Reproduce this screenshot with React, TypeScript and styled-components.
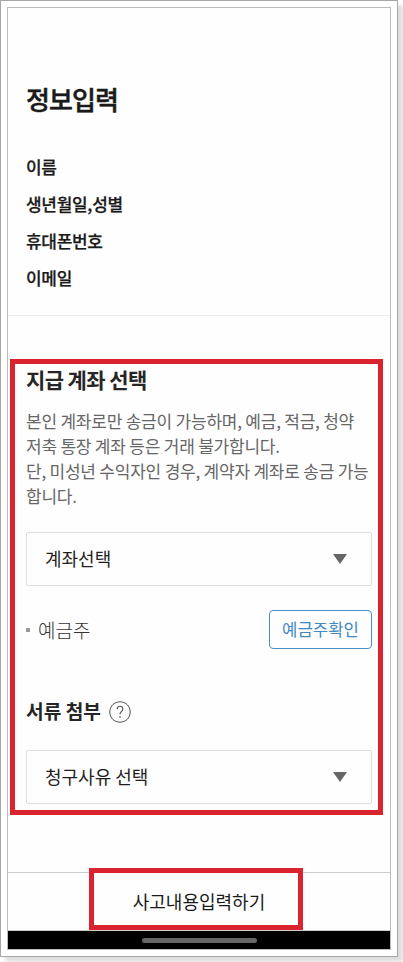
import React from 'react';
import styled, { createGlobalStyle } from 'styled-components';

const Global = createGlobalStyle`
  * { box-sizing: border-box; }
  html, body { margin: 0; background: #fff; }
  body {
    min-height: 962px;
    font-family: "Noto Sans CJK KR", "Noto Sans", sans-serif;
    color: #1a1a1a;
    overflow: hidden;
  }
  h1, h2, p, ul { margin: 0; padding: 0; }
`;

const Frame = styled.main`
  width: 398px;
  height: 957px;
  padding: 6px;
  border: 1px solid #a6a6a6;
  background: #fff;
  box-shadow: 5px 5px 4px #dedede;
`;

const Screen = styled.div`
  width: 384px;
  height: 943px;
  border: 1px solid #bcbcbc;
  display: flex;
  flex-direction: column;
  background: #fefefe;
`;

const Profile = styled.section`
  height: 308px;
  padding: 71px 0 0 18px;
  border-bottom: 1px solid #eee;
`;

const Title = styled.h1`
  font-size: 26px;
  line-height: 40px;
  font-weight: 500;
  letter-spacing: -0.9px;
  -webkit-text-stroke: 0.5px;
  white-space: nowrap;
`;

const InfoList = styled.ul`
  list-style: none;
  padding-top: 29px;
`;

const InfoItem = styled.li`
  height: 37px;
  line-height: 37px;
  font-size: 17px;
  font-weight: 500;
  letter-spacing: -0.3px;
  -webkit-text-stroke: 0.25px;
`;

const Claim = styled.section`
  width: 373px;
  height: 456px;
  margin: 43px 0 0 2px;
  padding: 0 6px 0 11px;
  border: 5px solid #d9232e;
  display: flex;
  flex-direction: column;
`;

const Heading = styled.h2<{ $size: number; $spacing: number }>`
  font-size: ${(p) => p.$size}px;
  letter-spacing: ${(p) => p.$spacing}px;
  line-height: 32px;
  font-weight: 700;
  color: #262626;
  white-space: nowrap;
`;

const ClaimHeading = styled(Heading)`
  line-height: 31px;
`;

const Notice = styled.p`
  margin-top: 13px;
  font-size: 17px;
  line-height: 25px;
  letter-spacing: -0.22px;
  color: #666;
  white-space: nowrap;
`;

const Select = styled.button<{ $top: number }>`
  margin-top: ${(p) => p.$top}px;
  width: 346px;
  height: 54px;
  flex: none;
  padding: 0 24px 0 18px;
  border: 1px solid #dedede;
  border-radius: 2px;
  background: transparent;
  display: flex;
  align-items: center;
  justify-content: space-between;
  font: 400 18px/26px "Noto Sans CJK KR", sans-serif;
  color: #1f1f1f;
`;

const SelectLabel = styled.span`
  padding-bottom: 2px;
`;

const HolderRow = styled.div`
  margin-top: 24px;
  height: 39px;
  display: flex;
  align-items: center;
`;

const Bullet = styled.span`
  width: 4px;
  height: 4px;
  background: #999;
`;

const HolderLabel = styled.span`
  flex: 1;
  margin-left: 8px;
  font-size: 19px;
  line-height: 28px;
  font-weight: 300;
  color: #333;
`;

const CheckButton = styled.button`
  width: 103px;
  height: 39px;
  padding: 0 0 2px;
  border: 1px solid #4a8fc6;
  border-radius: 4px;
  background: transparent;
  font: 400 16.7px/24px "Noto Sans CJK KR", sans-serif;
  color: #4189c3;
`;

const AttachRow = styled.div`
  margin-top: 46px;
  height: 34px;
  display: flex;
  align-items: center;
  gap: 8px;

  ${Heading} {
    padding-bottom: 2px;
  }
`;

const Footer = styled.footer`
  position: relative;
  margin-top: 57px;
  height: 59px;
  border-top: 1px solid #ccc;
  border-bottom: 1px solid #ccc;
  display: flex;
  justify-content: center;
`;

const SubmitButton = styled.button`
  width: 100%;
  padding: 0 0 1px;
  border: 0;
  background: transparent;
  font: 400 18px/27px "Noto Sans CJK KR", sans-serif;
  color: #1a1a1a;
`;

const Marker = styled.span`
  position: absolute;
  left: 81px;
  top: -5px;
  width: 214px;
  height: 62px;
  border: 5px solid #d9232e;
  pointer-events: none;
`;

const HomeBar = styled.div`
  flex: 1;
  background: #000;
  display: flex;
  justify-content: center;
  align-items: center;
`;

const HomePill = styled.span`
  width: 115px;
  height: 5px;
  border-radius: 3px;
  background: #666;
`;

const Arrow = () => (
  <svg width="14" height="10" viewBox="0 0 14 10">
    <path d="M0 0h14L7 10z" fill="#666" />
  </svg>
);

const HelpIcon = () => (
  <svg width="22" height="22" viewBox="0 0 22 22" fill="none" stroke="#555">
    <circle cx="11" cy="11" r="10.3" strokeWidth="1" />
    <path d="M8.2 8.2C8.2 6.3 9.4 5.3 11 5.3s2.8 1 2.8 2.7c0 2.3-2.8 2.6-2.8 5.2" strokeWidth="1.1" />
    <circle cx="11" cy="15.9" r=".8" fill="#555" stroke="none" />
  </svg>
);

const fields = ['이름', '생년월일,성별', '휴대폰번호', '이메일'];

export default function App() {
  return (
    <>
      <Global />
      <Frame>
        <Screen>
          <Profile>
            <Title>정보입력</Title>
            <InfoList>
              {fields.map((f) => (
                <InfoItem key={f}>{f}</InfoItem>
              ))}
            </InfoList>
          </Profile>
          <Claim>
            <ClaimHeading $size={21} $spacing={-0.6}>지급 계좌 선택</ClaimHeading>
            <Notice>
              본인 계좌로만 송금이 가능하며, 예금, 적금, 청약<br />
              저축 통장 계좌 등은 거래 불가합니다.<br />
              단, 미성년 수익자인 경우, 계약자 계좌로 송금 가능<br />
              합니다.
            </Notice>
            <Select $top={24}>
              <SelectLabel>계좌선택</SelectLabel>
              <Arrow />
            </Select>
            <HolderRow>
              <Bullet />
              <HolderLabel>예금주</HolderLabel>
              <CheckButton>예금주확인</CheckButton>
            </HolderRow>
            <AttachRow>
              <Heading $size={19.2} $spacing={0}>서류 첨부</Heading>
              <HelpIcon />
            </AttachRow>
            <Select $top={21}>
              <SelectLabel>청구사유 선택</SelectLabel>
              <Arrow />
            </Select>
          </Claim>
          <Footer>
            <SubmitButton>사고내용입력하기</SubmitButton>
            <Marker />
          </Footer>
          <HomeBar>
            <HomePill />
          </HomeBar>
        </Screen>
      </Frame>
    </>
  );
}
